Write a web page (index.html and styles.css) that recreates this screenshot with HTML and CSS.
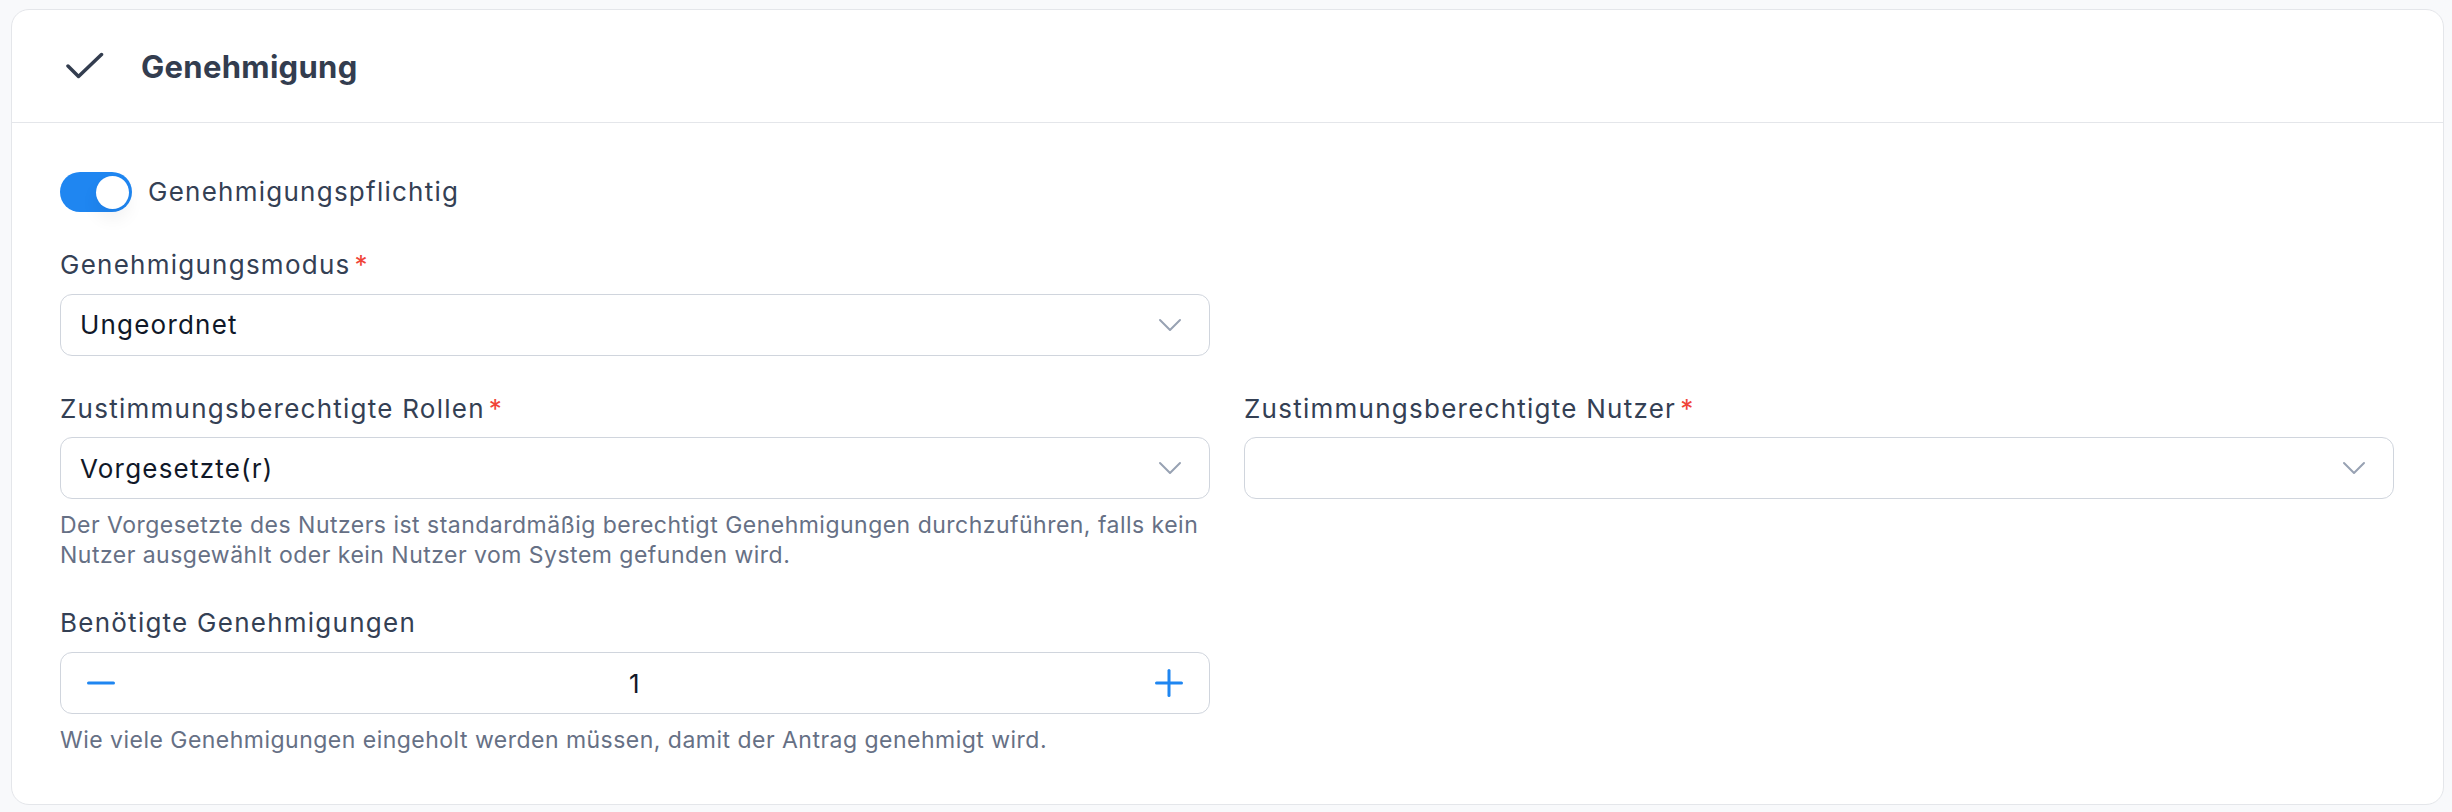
FILE: index.html
```html
<!DOCTYPE html>
<html lang="de">
<head>
    <meta charset="UTF-8">
    <title>Genehmigung</title>
    <link rel="stylesheet" href="styles.css">
</head>
<body>
    <section class="panel">
        <!-- Panel header -->
        <header class="panel-header">
            <svg class="panel-icon" width="38" height="36" viewBox="0 0 38 36" aria-hidden="true">
                <polyline points="2,18 12.5,28.5 35.5,6.5" fill="none" stroke="currentColor" stroke-width="3.5" stroke-linecap="round" stroke-linejoin="round"/>
            </svg>
            <h2 class="panel-title">Genehmigung</h2>
        </header>

        <div class="panel-body">
            <div class="form-grid">
                <label class="switch-row">
                    <span class="switch is-on"><span class="switch-knob"></span></span>
                    <span class="switch-label">Genehmigungspflichtig</span>
                </label>

                <div class="field col-first">
                    <div class="field-label required">Genehmigungsmodus</div>
                    <div class="select">
                        <span class="select-value">Ungeordnet</span>
                        <svg class="chevron" width="24" height="14" viewBox="0 0 24 14" aria-hidden="true">
                            <polyline points="2,2 12,12 22,2" fill="none" stroke="currentColor" stroke-width="2" stroke-linecap="round" stroke-linejoin="round"/>
                        </svg>
                    </div>
                </div>

                <div class="field col-first">
                    <div class="field-label required">Zustimmungsberechtigte Rollen</div>
                    <div class="select">
                        <span class="select-value">Vorgesetzte(r)</span>
                        <svg class="chevron" width="24" height="14" viewBox="0 0 24 14" aria-hidden="true">
                            <polyline points="2,2 12,12 22,2" fill="none" stroke="currentColor" stroke-width="2" stroke-linecap="round" stroke-linejoin="round"/>
                        </svg>
                    </div>
                    <p class="field-help">Der Vorgesetzte des Nutzers ist standardmäßig berechtigt Genehmigungen durchzuführen, falls kein Nutzer ausgewählt oder kein Nutzer vom System gefunden wird.</p>
                </div>

                <div class="field">
                    <div class="field-label required">Zustimmungsberechtigte Nutzer</div>
                    <div class="select">
                        <span class="select-value"></span>
                        <svg class="chevron" width="24" height="14" viewBox="0 0 24 14" aria-hidden="true">
                            <polyline points="2,2 12,12 22,2" fill="none" stroke="currentColor" stroke-width="2" stroke-linecap="round" stroke-linejoin="round"/>
                        </svg>
                    </div>
                </div>

                <div class="field col-first">
                    <div class="field-label">Benötigte Genehmigungen</div>
                    <div class="stepper">
                        <svg class="stepper-btn" width="28" height="28" viewBox="0 0 28 28" aria-hidden="true">
                            <line x1="1.5" y1="14" x2="26.5" y2="14" stroke="currentColor" stroke-width="3" stroke-linecap="round"/>
                        </svg>
                        <span class="stepper-value">1</span>
                        <svg class="stepper-btn" width="28" height="28" viewBox="0 0 28 28" aria-hidden="true">
                            <line x1="1.5" y1="14" x2="26.5" y2="14" stroke="currentColor" stroke-width="3" stroke-linecap="round"/>
                            <line x1="14" y1="1.5" x2="14" y2="26.5" stroke="currentColor" stroke-width="3" stroke-linecap="round"/>
                        </svg>
                    </div>
                    <p class="field-help">Wie viele Genehmigungen eingeholt werden müssen, damit der Antrag genehmigt wird.</p>
                </div>
            </div>
        </div>
    </section>
</body>
</html>
```

FILE: styles.css
```css
* {
    box-sizing: border-box;
}

body {
    margin: 0;
    padding: 9px 8px 8px 11px;
    background-color: #f8f9fb;
    font-family: Inter, "Noto Sans", sans-serif;
    color: #344054;
}

.panel {
    background-color: #fff;
    border: 1px solid #e4e6ea;
    border-radius: 18px;
}

.panel-header {
    display: flex;
    align-items: center;
    gap: 37px;
    height: 113px;
    padding-left: 54px;
    border-bottom: 1px solid #e4e6ea;
    color: #333d4f;
}

.panel-icon {
    flex-shrink: 0;
}

.panel-title {
    margin: 0;
    font-size: 31px;
    font-weight: 700;
    letter-spacing: 0.3px;
}

.panel-body {
    padding: 49px 49px 49px 48px;
}

.form-grid {
    display: grid;
    grid-template-columns: 1fr 1fr;
    column-gap: 34px;
    row-gap: 34px;
}

.col-first {
    grid-column: 1;
}

/* toggle */
.switch-row {
    grid-column: 1 / -1;
    display: flex;
    align-items: center;
    gap: 16px;
}

.switch {
    position: relative;
    width: 72px;
    height: 40px;
    border-radius: 20px;
    background-color: #dfe3e8;
}

.switch.is-on {
    background-color: #1f86f1;
}

.switch-knob {
    position: absolute;
    top: 3.5px;
    left: 3.5px;
    width: 33px;
    height: 33px;
    border-radius: 50%;
    background-color: #fff;
    box-shadow: 0 10px 18px rgba(16, 24, 40, 0.06);
}

.switch.is-on .switch-knob {
    left: auto;
    right: 3.5px;
}

.switch-label {
    font-size: 26px;
    letter-spacing: 1.25px;
    line-height: 1.45;
}

/* fields */
.field-label {
    font-size: 26px;
    letter-spacing: 1.25px;
    line-height: 1.45;
    margin-bottom: 10px;
}

.required::after {
    content: "*";
    color: #f04438;
    margin-left: 4px;
}

.select,
.stepper {
    display: flex;
    align-items: center;
    height: 62px;
    border: 1px solid #d0d5dd;
    border-radius: 12px;
    background-color: #fff;
    font-size: 26px;
    letter-spacing: 1.2px;
    color: #101828;
}

.select {
    justify-content: space-between;
    padding: 0 27px 0 19px;
}

.chevron {
    color: #98a2b3;
    flex-shrink: 0;
}

.stepper {
    justify-content: space-between;
    padding: 0 26px;
}

.stepper-btn {
    color: #1f86f1;
}

.stepper-value {
    flex: 1;
    text-align: center;
}

.field-help {
    margin: 11px 0 0;
    font-size: 23px;
    letter-spacing: 0.48px;
    line-height: 30px;
    color: #667085;
}
```
